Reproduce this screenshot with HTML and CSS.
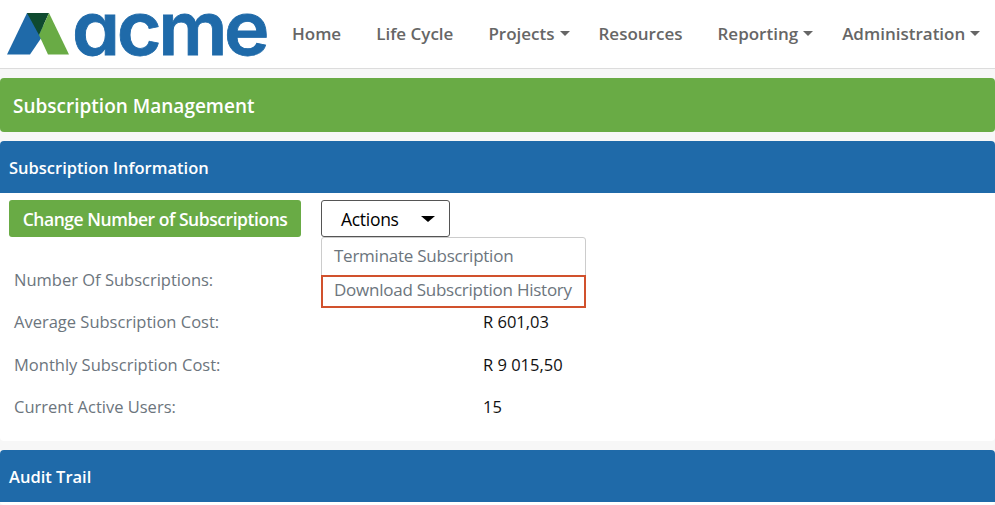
FILE: index.html
```html
<!DOCTYPE html>
<html lang="en">
<head>
<meta charset="utf-8">
<title>Subscription Management</title>
<link rel="stylesheet" href="styles.css">
</head>
<body>
<nav class="navbar">
  <svg class="logo" width="275" height="68" viewBox="0 0 275 68" role="img" aria-label="acme">
    <polygon points="7,54.5 27,13 38,13 46,31 30,54.5" fill="#1f6aa9"/>
    <polygon points="27,13 49,13 39,35" fill="#0f4a2f"/>
    <polygon points="49,13 69,54.5 48,54.5 39,35" fill="#69ab45"/>
    <text class="logo-word" x="0" y="55" transform="translate(72 0) scale(1.04 1)" textLength="190" lengthAdjust="spacing">acme</text>
  </svg>
  <ul class="nav-list">
    <li class="nav-item">Home</li>
    <li class="nav-item">Life Cycle</li>
    <li class="nav-item caret">Projects</li>
    <li class="nav-item">Resources</li>
    <li class="nav-item caret">Reporting</li>
    <li class="nav-item caret">Administration</li>
  </ul>
</nav>
<main class="page">
  <h1 class="banner">Subscription Management</h1>
  <section class="card">
    <h2 class="card-head">Subscription Information</h2>
    <div class="card-body">
      <div class="toolbar">
        <button class="btn-green">Change Number of Subscriptions</button>
        <div class="dropdown">
          <button class="btn-actions">Actions<span class="arrow"></span></button>
          <ul class="menu">
            <li class="menu-item">Terminate Subscription</li>
            <li class="menu-item selected">Download Subscription History</li>
          </ul>
        </div>
      </div>
      <dl class="info">
        <dt>Number Of Subscriptions:</dt><dd></dd>
        <dt>Average Subscription Cost:</dt><dd>R 601,03</dd>
        <dt>Monthly Subscription Cost:</dt><dd>R 9 015,50</dd>
        <dt>Current Active Users:</dt><dd>15</dd>
      </dl>
    </div>
  </section>
  <section class="card card-last">
    <h2 class="card-head">Audit Trail</h2>
    <div class="card-rest"></div>
  </section>
</main>
</body>
</html>
```
FILE: styles.css
```css
* { box-sizing: border-box; }
html, body { margin: 0; height: 100%; overflow: hidden; }
body { background: #f7f7f7; font-family: "Open Sans", "Noto Sans", sans-serif; font-size: 16px; color: #212529; }
.navbar { display: flex; align-items: flex-start; height: 69px; background: #fff; border-bottom: 1px solid #dcdcdc; }
.logo { flex: none; display: block; margin-right: -7px; }
.logo-word { font-family: "Inter", sans-serif; font-size: 74px; font-weight: 600; fill: #1f6aa9; stroke: #1f6aa9; stroke-width: .8px; font-feature-settings: "cv11" 1; }
.nav-list { display: flex; list-style: none; margin: 0; padding: 0 0 0 24px; }
.nav-item { font-size: 17px; font-weight: 600; color: #666; line-height: 24px; margin-top: 22px; margin-right: 35px; white-space: nowrap; }
.caret { position: relative; margin-right: 29px; }
.caret::after { content: ""; display: inline-block; margin-left: 5px; vertical-align: 4px; border-top: 5px solid #666; border-left: 5px solid transparent; border-right: 5px solid transparent; }
.page { padding-top: 9px; }
.banner { margin: 0 0 9px; height: 54px; line-height: 56px; padding-left: 13px; background: #69ab45; color: #fff; font-size: 19px; font-weight: 600; border-radius: 4px; }
.card { margin-bottom: 9px; background: #fff; border-radius: 4px; }
.card-last { margin-bottom: 0; }
.card-head { margin: 0; height: 52px; line-height: 53px; padding-left: 9px; background: #1f6aa9; color: #fff; font-size: 16.5px; font-weight: 600; border-radius: 4px 4px 0 0; }
.card-body { padding: 7px 9px 14px; height: 248px; }
.card-rest { height: 3px; }
.toolbar { display: flex; align-items: flex-start; gap: 20px; }
.btn-green { width: 292px; height: 37px; padding: 0; border: 0; border-radius: 3px; background: #69ab45; color: #fff; font: 600 17.5px "Open Sans", sans-serif; letter-spacing: -.45px; }
.dropdown { position: relative; }
.btn-actions { display: flex; align-items: center; justify-content: space-between; width: 129px; height: 37px; padding: 0 14px 0 19px; background: #fff; border: 1px solid #555; border-radius: 3px; color: #000; font: 500 17.5px "Open Sans", sans-serif; letter-spacing: -.3px; }
.arrow { border-top: 6px solid #000; border-left: 7px solid transparent; border-right: 7px solid transparent; }
.menu { position: absolute; left: 0; top: 37px; width: 265px; margin: 0; padding: 0; list-style: none; background: #fff; border: 1px solid #ccc; border-radius: 3px; z-index: 2; }
.menu-item { height: 37px; line-height: 36px; padding-left: 12px; color: #6c757d; font-size: 17px; letter-spacing: -.25px; white-space: nowrap; }
.selected { height: 33px; line-height: 26px; margin: 0 -1px -1px; padding-left: 11px; border: 2px solid #d1512d; }
.info { display: grid; grid-template-columns: 469px 1fr; grid-auto-rows: 42.4px; margin: 22px 0 0 5px; font-size: 16.5px; line-height: 42px; }
.info dt { color: #6c757d; }
.info dd { margin: 0; color: #111; }
```
